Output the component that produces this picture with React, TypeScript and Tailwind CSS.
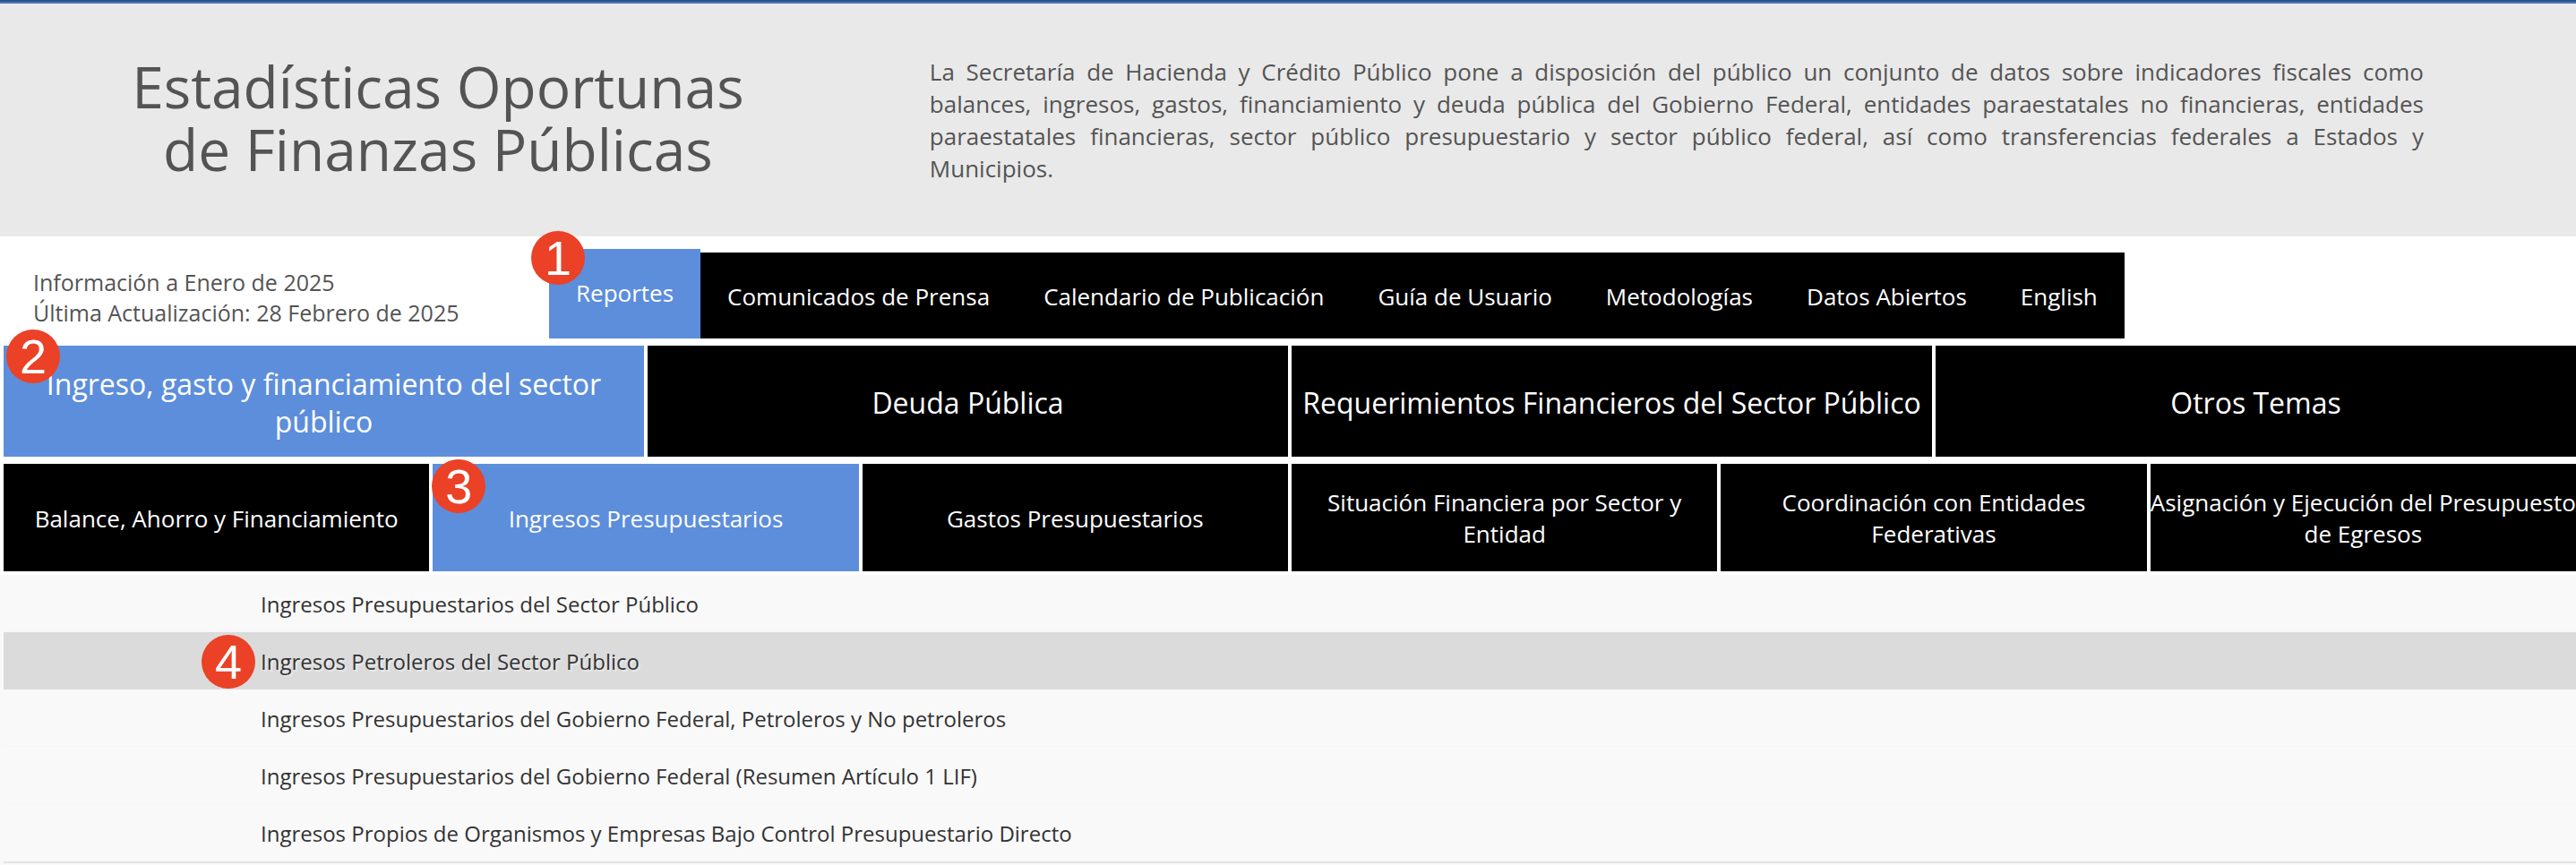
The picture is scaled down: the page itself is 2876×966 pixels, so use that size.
const topNav = [
  'Comunicados de Prensa',
  'Calendario de Publicación',
  'Guía de Usuario',
  'Metodologías',
  'Datos Abiertos',
  'English',
];

const themes = [
  'Ingreso, gasto y financiamiento del sector público',
  'Deuda Pública',
  'Requerimientos Financieros del Sector Público',
  'Otros Temas',
];

const sections = [
  'Balance, Ahorro y Financiamiento',
  'Ingresos Presupuestarios',
  'Gastos Presupuestarios',
  'Situación Financiera por Sector y Entidad',
  'Coordinación con Entidades Federativas',
  'Asignación y Ejecución del Presupuesto de Egresos',
];

const reports = [
  'Ingresos Presupuestarios del Sector Público',
  'Ingresos Petroleros del Sector Público',
  'Ingresos Presupuestarios del Gobierno Federal, Petroleros y No petroleros',
  'Ingresos Presupuestarios del Gobierno Federal (Resumen Artículo 1 LIF)',
  'Ingresos Propios de Organismos y Empresas Bajo Control Presupuestario Directo',
];

function Step({ n, place }: { n: number; place: string }) {
  return (
    <span
      className={`absolute z-10 flex size-[60px] items-center justify-center rounded-full bg-[#eb4127] font-['Liberation_Sans',sans-serif] text-[54px] leading-none text-white ${place}`}
    >
      {n}
    </span>
  );
}

export default function App() {
  return (
    <div className="min-h-screen bg-white font-['Open_Sans',sans-serif] text-[26px] leading-[34px] text-[#545454]">
      <div className="h-1 border-b-2 border-[#4f77b0] bg-[#28518f]" />
      <header className="flex items-start bg-[#e9e9e9] py-[58px]">
        <h1 className="w-[34%] text-center text-[64px] leading-[70px]">
          Estadísticas Oportunas
          <br />
          de Finanzas Públicas
        </h1>
        <p className="ml-[60px] w-[58%] text-justify leading-[36px]">
          La Secretaría de Hacienda y Crédito Público pone a disposición del público un conjunto de datos sobre
          indicadores fiscales como balances, ingresos, gastos, financiamiento y deuda pública del Gobierno Federal,
          entidades paraestatales no financieras, entidades paraestatales financieras, sector público presupuestario y
          sector público federal, así como transferencias federales a Estados y Municipios.
        </p>
      </header>

      <div className="flex items-end pt-[14px]">
        <p className="w-[613px] shrink-0 pb-3 pl-[37px] text-[25px]">
          Información a Enero de 2025
          <br />
          Última Actualización: 28 Febrero de 2025
        </p>
        <nav className="flex items-end text-white">
          <a href="#reportes" className="relative h-[100px] bg-[#5d8edb] px-[30px] pt-8">
            Reportes
            <Step n={1} place="-left-5 -top-5" />
          </a>
          {topNav.map((t) => (
            <a key={t} href="#nav" className="h-24 bg-black px-[30px] pt-8">
              {t}
            </a>
          ))}
        </nav>
      </div>

      <nav className="mt-2 grid grid-cols-4 gap-x-1 pl-1 text-[32px] leading-[42px] text-white">
        {themes.map((t, i) => (
          <a
            key={t}
            href="#tema"
            className={`relative flex h-[124px] items-center justify-center pt-1 text-center ${i === 0 ? 'bg-[#5d8edb] px-8' : 'bg-black'}`}
          >
            {t}
            {i === 0 && <Step n={2} place="left-[3px] top-[-18px]" />}
          </a>
        ))}
      </nav>

      <nav className="mt-2 grid grid-cols-6 gap-x-1 pl-1 leading-[35px] text-white">
        {sections.map((t, i) => (
          <a
            key={t}
            href="#seccion"
            className={`relative flex h-[120px] items-center justify-center pt-[2px] text-center ${i === 1 ? 'bg-[#5d8edb]' : 'bg-black'}`}
          >
            {t}
            {i === 1 && <Step n={3} place="left-[-1px] top-[-5px]" />}
          </a>
        ))}
      </nav>

      <div className="mt-1 bg-[#f9f9f9] pb-[2px] pl-1">
        <ul className="border-b-2 border-[#e3e3e3] text-[24px] text-[#333333]">
          {reports.map((t, i) => (
            <li
              key={t}
              className={`relative h-16 border-b-2 pt-4 pl-[287px] last:border-b-0 ${i === 1 ? 'border-[#dbdbdb] bg-[#dbdbdb] text-shadow-[2px_2px_0_#e8e8e8]' : 'border-[#f7f7f7]'}`}
            >
              <a href="#reporte">{t}</a>
              {i === 1 && <Step n={4} place="left-[221px] top-[3px] text-shadow-none" />}
            </li>
          ))}
        </ul>
      </div>
    </div>
  );
}
